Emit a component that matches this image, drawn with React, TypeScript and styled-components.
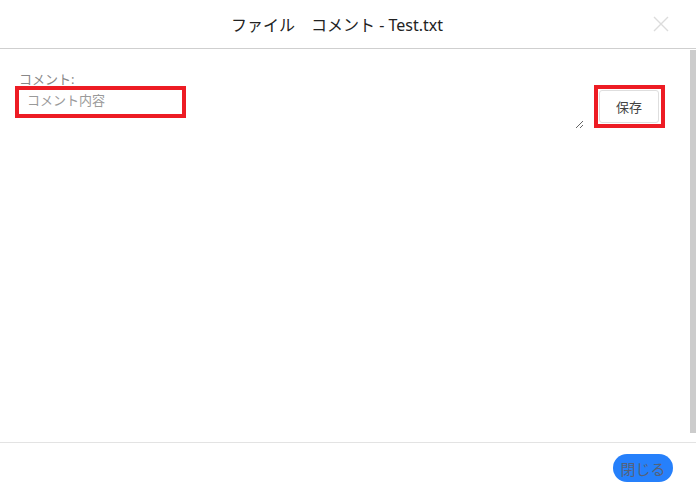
import React from "react";
import styled, { createGlobalStyle } from "styled-components";

const Global = createGlobalStyle`
  html, body {
    margin: 0;
    padding: 0;
    background: #fff;
  }
  body {
    font-family: "Noto Sans", "Noto Sans CJK JP", sans-serif;
    color: #333;
  }
`;

const Dialog = styled.div`
  width: 696px;
  height: 492px;
  display: flex;
  flex-direction: column;
  background: #fff;
`;

const Header = styled.div`
  height: 48px;
  flex: none;
  display: flex;
  align-items: center;
  justify-content: center;
  border-bottom: 1px solid #cfcfcf;
  position: relative;
`;

const Title = styled.h1`
  margin: 0 0 0 -22px;
  font-size: 16px;
  font-weight: 400;
  color: #222;
  letter-spacing: 0;
`;

const CloseX = styled.button`
  position: absolute;
  right: 26px;
  top: 15px;
  width: 18px;
  height: 18px;
  padding: 0;
  border: none;
  background: none;
  cursor: pointer;
`;

const Body = styled.div`
  flex: 1;
  display: flex;
  min-height: 0;
`;

const Content = styled.div`
  flex: 1;
  padding: 22px 31px 0 19px;
  display: flex;
  gap: 15px;
`;

const Scroll = styled.div`
  width: 6px;
  flex: none;
  margin: 1px 0 9px;
  background: #cccccc;
`;

const Field = styled.div`
  flex: 1;
  display: flex;
  flex-direction: column;
`;

const Label = styled.label`
  font-size: 13px;
  line-height: 16px;
  color: #888;
`;

const Marked = styled.div`
  position: relative;
`;

const Mark = styled.div<{ $l: number; $t: number; $w: number; $h: number }>`
  position: absolute;
  left: ${(p) => p.$l}px;
  top: ${(p) => p.$t}px;
  width: ${(p) => p.$w}px;
  height: ${(p) => p.$h}px;
  border: 4px solid #ed1c24;
  box-sizing: border-box;
  pointer-events: none;
`;

const Area = styled.textarea`
  display: block;
  width: 100%;
  height: 42px;
  box-sizing: border-box;
  border: none;
  outline: none;
  padding: 4px 8px;
  font-family: "Noto Sans", "Noto Sans CJK JP", sans-serif;
  font-size: 13px;
  line-height: 18px;
  color: #333;
  resize: vertical;
  &::placeholder {
    color: #9a9a9a;
  }
`;

const SaveWrap = styled.div`
  position: relative;
  margin-top: 19px;
  align-self: flex-start;
`;

const SaveButton = styled.button`
  display: block;
  width: 60px;
  height: 33px;
  border: 1px solid #dedede;
  border-radius: 3px;
  background: #fff;
  font-family: "Noto Sans", "Noto Sans CJK JP", sans-serif;
  font-size: 13px;
  color: #444;
  cursor: pointer;
`;

const Footer = styled.div`
  height: 50px;
  flex: none;
  border-top: 1px solid #e3e3e3;
  display: flex;
  justify-content: flex-end;
  align-items: flex-start;
  padding: 11px 23px 0 0;
  box-sizing: border-box;
`;

const CloseButton = styled.button`
  width: 60px;
  height: 28px;
  border: none;
  border-radius: 14px;
  background: #2680fb;
  color: #55627a;
  font-family: "Noto Sans", "Noto Sans CJK JP", sans-serif;
  font-size: 15px;
  padding: 0;
  cursor: default;
`;

export default function App() {
  return (
    <>
      <Global />
      <Dialog>
        <Header>
          <Title>ファイル　コメント - Test.txt</Title>
          <CloseX aria-label="close">
            <svg width="18" height="18" viewBox="0 0 18 18">
              <path d="M2 2 L16 16 M16 2 L2 16" stroke="#dcdcdc" strokeWidth="1.4" />
            </svg>
          </CloseX>
        </Header>
        <Body>
          <Content>
            <Field>
              <Label>コメント:</Label>
              <Marked>
                <Mark $l={-4} $t={-1} $w={171} $h={32} />
                <Area placeholder="コメント内容" />
              </Marked>
            </Field>
            <SaveWrap>
              <Mark $l={-5} $t={-5} $w={71} $h={43} />
              <SaveButton>保存</SaveButton>
            </SaveWrap>
          </Content>
          <Scroll />
        </Body>
        <Footer>
          <CloseButton>閉じる</CloseButton>
        </Footer>
      </Dialog>
    </>
  );
}
